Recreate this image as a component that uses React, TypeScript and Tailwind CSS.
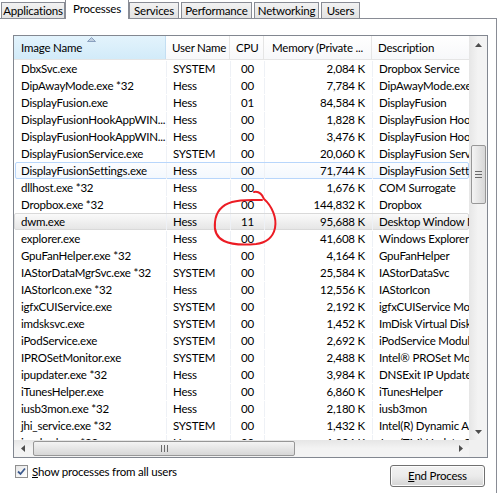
import React from "react";

type Row = { name: string; user: string; cpu: string; mem: string; desc: string };

const rows: Row[] = [
  { name: "DbxSvc.exe", user: "SYSTEM", cpu: "00", mem: "2,084 K", desc: "Dropbox Service" },
  { name: "DipAwayMode.exe *32", user: "Hess", cpu: "00", mem: "7,784 K", desc: "DipAwayMode.exe" },
  { name: "DisplayFusion.exe", user: "Hess", cpu: "01", mem: "84,584 K", desc: "DisplayFusion" },
  { name: "DisplayFusionHookAppWIN...", user: "Hess", cpu: "00", mem: "1,828 K", desc: "DisplayFusion Hook" },
  { name: "DisplayFusionHookAppWIN...", user: "Hess", cpu: "00", mem: "3,476 K", desc: "DisplayFusion Hook" },
  { name: "DisplayFusionService.exe", user: "SYSTEM", cpu: "00", mem: "20,060 K", desc: "DisplayFusion Service" },
  { name: "DisplayFusionSettings.exe", user: "Hess", cpu: "00", mem: "71,744 K", desc: "DisplayFusion Settings" },
  { name: "dllhost.exe *32", user: "Hess", cpu: "00", mem: "1,676 K", desc: "COM Surrogate" },
  { name: "Dropbox.exe *32", user: "Hess", cpu: "00", mem: "144,832 K", desc: "Dropbox" },
  { name: "dwm.exe", user: "Hess", cpu: "11", mem: "95,688 K", desc: "Desktop Window Manager" },
  { name: "explorer.exe", user: "Hess", cpu: "00", mem: "41,608 K", desc: "Windows Explorer" },
  { name: "GpuFanHelper.exe *32", user: "Hess", cpu: "00", mem: "4,164 K", desc: "GpuFanHelper" },
  { name: "IAStorDataMgrSvc.exe *32", user: "SYSTEM", cpu: "00", mem: "25,584 K", desc: "IAStorDataSvc" },
  { name: "IAStorIcon.exe *32", user: "Hess", cpu: "00", mem: "12,556 K", desc: "IAStorIcon" },
  { name: "igfxCUIService.exe", user: "SYSTEM", cpu: "00", mem: "2,192 K", desc: "igfxCUIService Module" },
  { name: "imdsksvc.exe", user: "SYSTEM", cpu: "00", mem: "1,452 K", desc: "ImDisk Virtual Disk Driver" },
  { name: "iPodService.exe", user: "SYSTEM", cpu: "00", mem: "2,692 K", desc: "iPodService Module" },
  { name: "IPROSetMonitor.exe", user: "SYSTEM", cpu: "00", mem: "2,488 K", desc: "Intel® PROSet Monitoring" },
  { name: "ipupdater.exe *32", user: "Hess", cpu: "00", mem: "3,984 K", desc: "DNSExit IP Updater" },
  { name: "iTunesHelper.exe", user: "Hess", cpu: "00", mem: "6,860 K", desc: "iTunesHelper" },
  { name: "iusb3mon.exe *32", user: "Hess", cpu: "00", mem: "2,180 K", desc: "iusb3mon" },
  { name: "jhi_service.exe *32", user: "SYSTEM", cpu: "00", mem: "1,432 K", desc: "Intel(R) Dynamic Application" },
  { name: "jusched.exe *32", user: "Hess", cpu: "00", mem: "1,904 K", desc: "Java(TM) Update Scheduler" },
];

const HOVER = 6;
const SELECTED = 9;

function Tab({ label, w, active }: { label: string; w: string; active?: boolean }) {
  if (active) {
    return (
      <div
        className={`${w} h-[20px] -mx-[2px] relative z-10 bg-white border border-b-0 border-[#898c95] flex items-start justify-center pt-[3px] whitespace-nowrap`}
      >
        {label}
      </div>
    );
  }
  return (
    <div
      className={`${w} h-[17px] bg-gradient-to-b from-[#f2f2f2] to-[#e2e2e2] border border-b-0 border-[#898c95] flex items-center justify-center whitespace-nowrap`}
    >
      {label}
    </div>
  );
}

function UpArrow() {
  return (
    <svg width="7" height="4" viewBox="0 0 7 4">
      <path d="M0 4 L3.5 0 L7 4 Z" fill="#4d4d4d" />
    </svg>
  );
}
function DownArrow() {
  return (
    <svg width="7" height="4" viewBox="0 0 7 4">
      <path d="M0 0 L3.5 4 L7 0 Z" fill="#4d4d4d" />
    </svg>
  );
}
function LeftArrow() {
  return (
    <svg width="4" height="7" viewBox="0 0 4 7">
      <path d="M4 0 L0 3.5 L4 7 Z" fill="#4d4d4d" />
    </svg>
  );
}
function RightArrow() {
  return (
    <svg width="4" height="7" viewBox="0 0 4 7">
      <path d="M0 0 L4 3.5 L0 7 Z" fill="#4d4d4d" />
    </svg>
  );
}

function ProcessRow({ r, i }: { r: Row; i: number }) {
  const hover = i === HOVER;
  const selected = i === SELECTED;
  const bg = selected
    ? "bg-gradient-to-b from-[#fafafa] to-[#e6e6e6] border border-[#d9d9d9] rounded-[2px]"
    : hover
    ? "left-[1px] bg-gradient-to-b from-[#fcfdfe] to-[#f3f8fe] border border-[#b8d6fb] rounded-[2px]"
    : "border border-transparent";
  return (
    <div className="h-[17px] flex items-center shrink-0 relative whitespace-nowrap pt-[1px]">
      <div className={`absolute inset-0 ${bg}`} />
      <div className="relative w-[152px] h-full flex items-center pl-[7px] overflow-hidden">{r.name}</div>
      <div className="relative w-[64px] h-full flex items-center pl-[6px] border-l border-[#eef1f6]">{r.user}</div>
      <div className="relative w-[34px] h-full flex items-center justify-end pr-[10px] border-l border-[#eef1f6]">
        {r.cpu}
      </div>
      <div className="relative w-[108px] h-full flex items-center justify-end pr-[7px] border-l border-[#eef1f6]">
        {r.mem}
      </div>
      <div className="relative w-[97px] h-full flex items-center pl-[6px] overflow-hidden border-l border-[#eef1f6]">
        {r.desc}
      </div>
    </div>
  );
}

export default function App() {
  return (
    <div
      className="w-[497px] h-[493px] bg-white relative overflow-hidden text-[11.5px] tracking-[-0.2px] leading-none text-black flex flex-col"
      style={{ fontFamily: '"Segoe UI", Lato, "Noto Sans", sans-serif' }}
    >
      {/* tab strip */}
      <div className="h-[19px] flex items-end pl-[1px] gap-[2px] shrink-0">
        <Tab label="Applications" w="w-[64px]" />
        <Tab label="Processes" w="w-[64px]" active />
        <Tab label="Services" w="w-[50px]" />
        <Tab label="Performance" w="w-[71px]" />
        <Tab label="Networking" w="w-[65px]" />
        <Tab label="Users" w="w-[39px]" />
      </div>

      {/* tab page */}
      <div className="flex-1 border-t border-r border-[#898c95] -mt-[1px] flex flex-col pl-[13px] pt-[16px]">
        {/* process list */}
        <div className="w-[475px] h-[423px] border border-[#828790] flex">
          <div className="w-[455px] flex flex-col">
            {/* header */}
            <div className="h-[24px] shrink-0 flex whitespace-nowrap border-b border-[#e5e5e5] bg-gradient-to-b from-white to-[#f7f8fa]">
              <div className="w-[152px] relative flex items-center pl-[7px] pt-[1px] bg-gradient-to-b from-[#e3f3fc] to-[#d2ebf9] border-r border-[#c3def2]">
                Image Name
                <svg className="absolute left-[73px] top-[1px]" width="9" height="5" viewBox="0 0 9 5">
                  <path d="M0.5 4.5 L4.5 0.5 L8.5 4.5 Z" fill="#c0cfe0" stroke="#8aa1bf" strokeWidth="1" />
                </svg>
              </div>
              <div className="w-[64px] flex items-center pl-[6px] pt-[1px] border-r border-[#e5e5e5]">User Name</div>
              <div className="w-[34px] flex items-center pl-[6px] pt-[1px] border-r border-[#e5e5e5]">CPU</div>
              <div className="w-[108px] flex items-center pl-[8px] pt-[1px] border-r border-[#e5e5e5]">
                Memory (Private ...
              </div>
              <div className="w-[97px] flex items-center pl-[6px] pt-[1px]">Description</div>
            </div>

            {/* rows */}
            <div className="flex-1 overflow-hidden flex flex-col">
              {rows.map((r, i) => (
                <ProcessRow key={i} r={r} i={i} />
              ))}
            </div>

            {/* horizontal scrollbar */}
            <div className="h-[17px] shrink-0 flex items-center bg-gradient-to-b from-[#e6e6e6] via-[#f3f3f3] to-[#f3f3f3]">
              <div className="w-[17px] h-full flex items-center justify-center">
                <LeftArrow />
              </div>
              <div className="w-[262px] h-[15px] ml-[2px] rounded-[2px] border border-[#979797] bg-gradient-to-b from-[#f4f4f4] to-[#d7d7d7] flex items-center justify-center gap-[2px]">
                <div className="w-[1px] h-[7px] bg-[#6b6b6b]" />
                <div className="w-[1px] h-[7px] bg-[#6b6b6b]" />
                <div className="w-[1px] h-[7px] bg-[#6b6b6b]" />
              </div>
              <div className="flex-1" />
              <div className="w-[17px] h-full flex items-center justify-center">
                <RightArrow />
              </div>
            </div>
          </div>

          {/* vertical scrollbar */}
          <div className="flex-1 flex flex-col">
            <div className="flex-1 flex flex-col bg-gradient-to-r from-[#e6e6e6] via-[#f3f3f3] to-[#f3f3f3]">
              <div className="h-[17px] flex items-center justify-center">
                <UpArrow />
              </div>
              <div className="h-[92px]" />
              <div className="h-[59px] w-[15px] mx-auto rounded-[2px] border border-[#979797] bg-gradient-to-r from-[#f4f4f4] to-[#d7d7d7] flex flex-col items-center justify-center gap-[2px]">
                <div className="w-[7px] h-[1px] bg-[#6b6b6b]" />
                <div className="w-[7px] h-[1px] bg-[#6b6b6b]" />
                <div className="w-[7px] h-[1px] bg-[#6b6b6b]" />
              </div>
              <div className="flex-1" />
              <div className="h-[17px] flex items-center justify-center">
                <DownArrow />
              </div>
            </div>
            <div className="h-[17px] bg-[#f0f0f0]" />
          </div>
        </div>

        {/* footer */}
        <div className="flex items-start justify-between pr-[11px] pt-[7px] whitespace-nowrap">
          <label className="flex items-center gap-[4px] ml-[2px]">
            <span className="w-[13px] h-[13px] border border-[#8f8f8f] bg-gradient-to-br from-[#e6e6e6] to-white flex items-center justify-center">
              <svg width="9" height="9" viewBox="0 0 9 9">
                <path d="M1 4.5 L3.5 7 L8 1.5" fill="none" stroke="#3c5a8e" strokeWidth="1.8" />
              </svg>
            </span>
            <span>
              <span className="underline">S</span>how processes from all users
            </span>
          </label>
          <button className="w-[95px] h-[22px] rounded-[3px] border border-[#707070] bg-gradient-to-b from-[#f2f2f2] via-[#ebebeb] to-[#d4d4d4] flex items-center justify-center shadow-[inset_0_0_0_1px_#fcfcfc]">
            <span>
              <span className="underline">E</span>nd Process
            </span>
          </button>
        </div>
      </div>

      {/* hand-drawn red marker around the dwm CPU value */}
      <svg className="absolute left-0 top-0 pointer-events-none" width="497" height="493" viewBox="0 0 497 493">
        <path
          d="M254 192 C259 191 262 194 264 199 C272 206 277 218 275 228 C273 238 265 243 256 244 C244 245 232 245 224 241 C216 237 214 230 215 222 C216 212 222 205 232 202 C242 199 252 200 262 200"
          fill="none"
          stroke="#ec1c24"
          strokeWidth="2"
          strokeLinecap="round"
        />
      </svg>
    </div>
  );
}
